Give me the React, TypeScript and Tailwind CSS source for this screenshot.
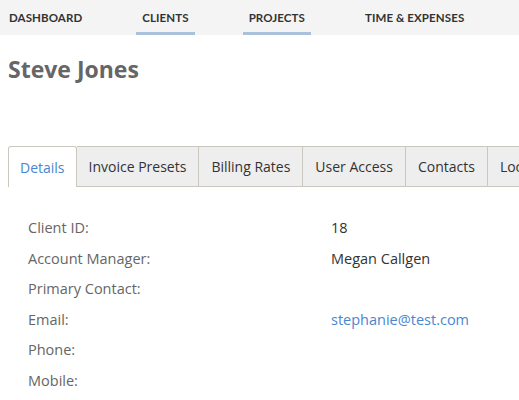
const navItems = [
  { label: "DASHBOARD", active: false },
  { label: "CLIENTS", active: true },
  { label: "PROJECTS", active: true },
  { label: "TIME & EXPENSES", active: false },
];

const tabs = ["Details", "Invoice Presets", "Billing Rates", "User Access", "Contacts", "Locations"];

const rows: { label: string; value?: string; link?: boolean }[] = [
  { label: "Client ID:", value: "18" },
  { label: "Account Manager:", value: "Megan Callgen" },
  { label: "Primary Contact:" },
  { label: "Email:", value: "stephanie@test.com", link: true },
  { label: "Phone:" },
  { label: "Mobile:" },
];

export default function App() {
  return (
    <div className="w-[519px] h-[400px] overflow-hidden bg-white font-['Open_Sans','Liberation_Sans',sans-serif]">
      {/* top nav */}
      <nav className="h-[35px] bg-[#f4f4f4] flex items-stretch pl-[3px] gap-[48px] font-['Lato','Liberation_Sans',sans-serif]">
        {navItems.map((n) => (
          <div
            key={n.label}
            className={`px-[6px] flex items-center text-[11.5px] font-bold text-[#333] tracking-[0.1px] border-b-[3px] ${
              n.active ? "border-[#a9c1da]" : "border-transparent"
            }`}
          >
            <span className="pt-[3px]">{n.label}</span>
          </div>
        ))}
      </nav>

      <h1 className="pl-[8px] pt-[20px] text-[23px] leading-[28px] font-bold text-[#666]">Steve Jones</h1>

      {/* tabs */}
      <div className="mt-[63px] ml-[8px] flex h-[41px] border-b border-[#c9c7bf] whitespace-nowrap">
        {tabs.map((t, i) =>
          i === 0 ? (
            <div
              key={t}
              className="px-[11px] flex items-center bg-white border border-b-0 border-[#c9c7bf] -mb-px text-[14px] text-[#4a86cf] rounded-t-[3px] shrink-0"
            >
              {t}
            </div>
          ) : (
            <div
              key={t}
              className="px-[12px] flex items-center bg-[#eeeeee] border-r border-t border-[#c9c7bf] text-[14px] text-[#333] shrink-0"
            >
              {t}
            </div>
          )
        )}
      </div>

      {/* details */}
      <div className="pt-[31px] pl-[28px] flex flex-col">
        {rows.map((r) => (
          <div key={r.label} className="flex h-[30.6px] text-[14.5px] leading-[20px]">
            <div className="w-[303px] text-[#666]">{r.label}</div>
            <div className={r.link ? "text-[#4a86cf]" : "text-[#333]"}>{r.value}</div>
          </div>
        ))}
      </div>
    </div>
  );
}
